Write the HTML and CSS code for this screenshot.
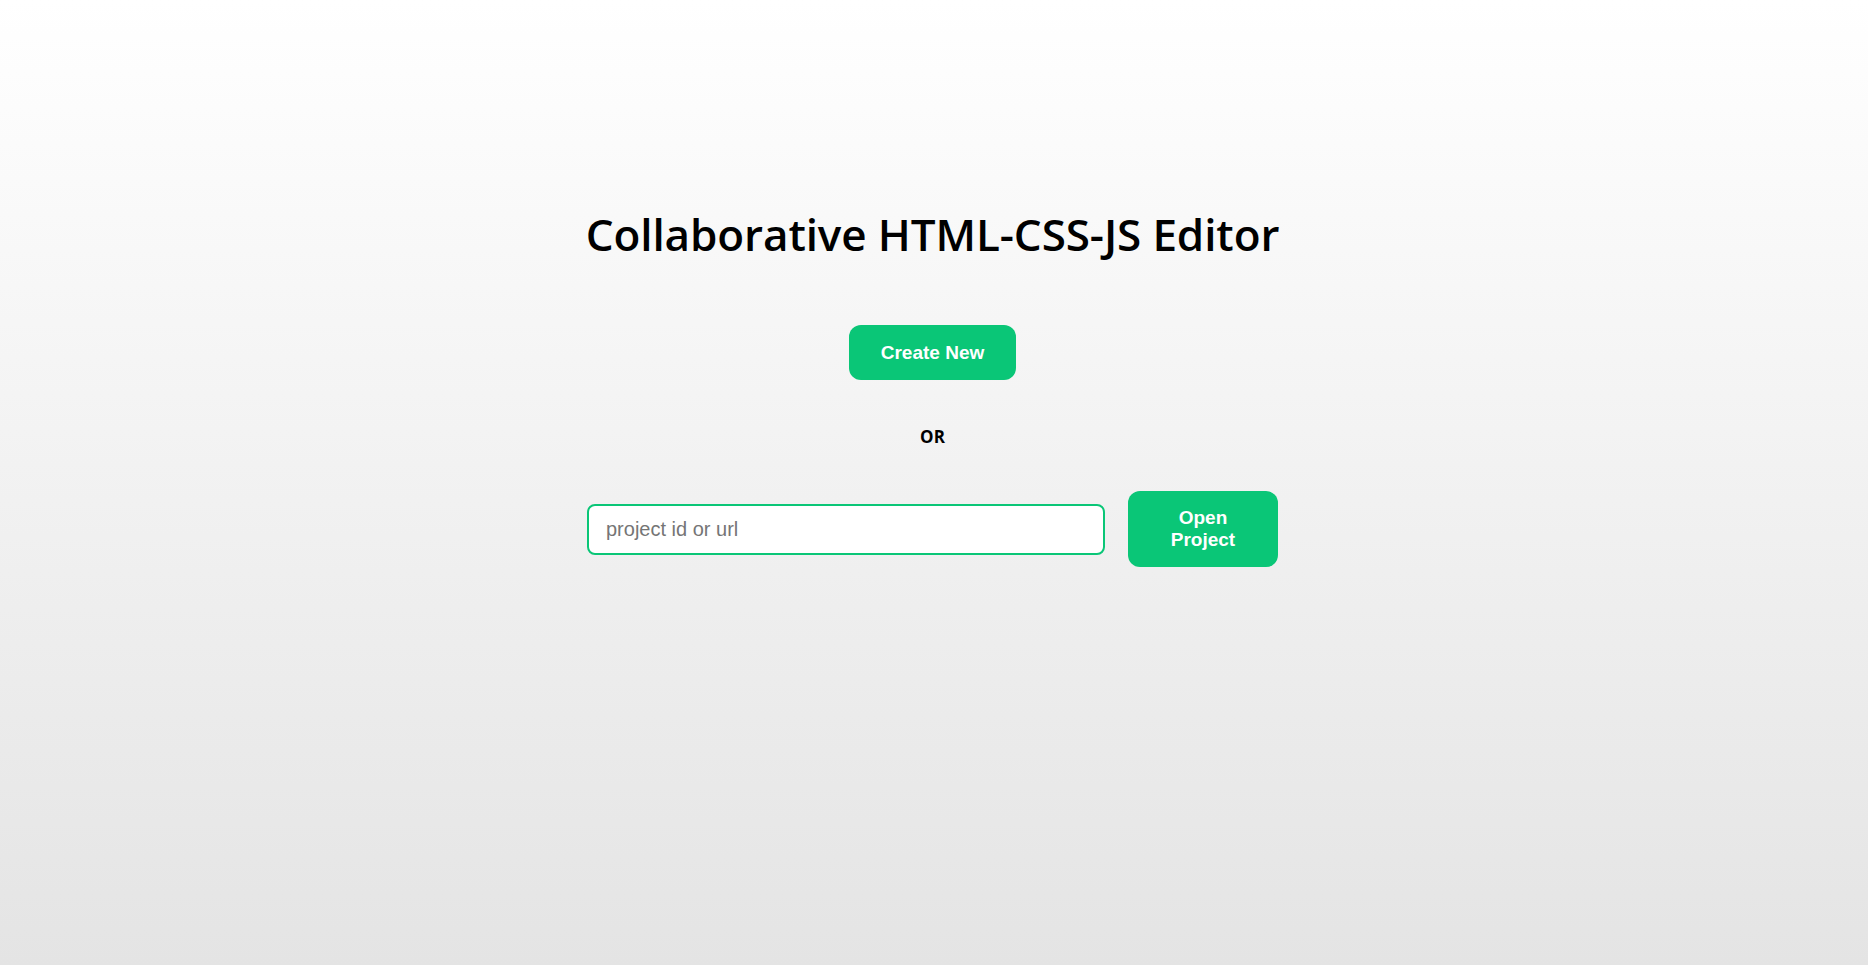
FILE: index.html
```html
<!DOCTYPE html>
<html lang="en">
<head>
<meta charset="utf-8">
<title>Collaborative HTML-CSS-JS Editor</title>
<link rel="stylesheet" href="styles.css">
</head>
<body>
<main class="home">
  <h1 class="title">Collaborative HTML-CSS-JS Editor</h1>
  <button class="btn btn-create" type="button">Create New</button>
  <p class="or">OR</p>
  <form class="open-row">
    <input class="project-input" type="text" placeholder="project id or url">
    <button class="btn btn-open" type="button">Open Project</button>
  </form>
</main>
</body>
</html>
```
FILE: styles.css
```css
html, body {
  margin: 0;
  padding: 0;
  height: 100%;
}
body {
  background: linear-gradient(to bottom, #ffffff 0%, #e4e4e4 100%);
  font-family: "Open Sans", "Noto Sans", sans-serif;
  color: #000;
}
.home {
  display: flex;
  flex-direction: column;
  align-items: center;
  padding-top: 205px;
  padding-right: 3px;
}
.title {
  margin: 0;
  font-family: "Open Sans", sans-serif;
  font-weight: 600;
  font-size: 44px;
  line-height: 58px;
  letter-spacing: -0.1px;
}
.btn {
  border: none;
  background: #0ac677;
  color: #fff;
  font-family: "Liberation Sans", Arial, sans-serif;
  font-weight: bold;
  font-size: 19px;
  border-radius: 12px;
  cursor: pointer;
}
.btn-create {
  margin-top: 62px;
  width: 167px;
  height: 55px;
}
.or {
  margin: 46px 0 0;
  font-family: "Open Sans", sans-serif;
  font-weight: 700;
  font-size: 17px;
  line-height: 22px;
}
.open-row {
  margin-top: 43px;
  display: flex;
  align-items: center;
  gap: 23px;
}
.project-input {
  box-sizing: border-box;
  width: 518px;
  height: 51px;
  border: 2px solid #0ac677;
  border-radius: 8px;
  padding: 0 17px;
  font-family: "Liberation Sans", Arial, sans-serif;
  font-size: 20px;
  background: #fff;
  outline: none;
}
.project-input::placeholder {
  color: #757575;
}
.btn-open {
  width: 150px;
  height: 76px;
  line-height: 22px;
  padding: 0 30px;
}
```
